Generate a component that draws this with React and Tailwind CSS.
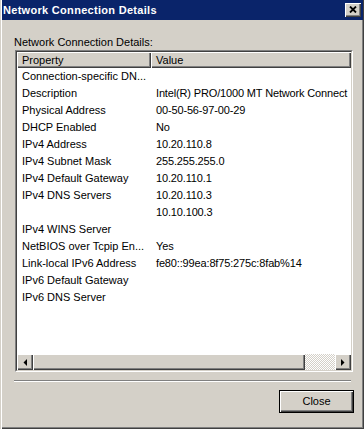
const rows = [
  ["Connection-specific DN...", ""],
  ["Description", "Intel(R) PRO/1000 MT Network Connect"],
  ["Physical Address", "00-50-56-97-00-29"],
  ["DHCP Enabled", "No"],
  ["IPv4 Address", "10.20.110.8"],
  ["IPv4 Subnet Mask", "255.255.255.0"],
  ["IPv4 Default Gateway", "10.20.110.1"],
  ["IPv4 DNS Servers", "10.20.110.3"],
  ["", "10.10.100.3"],
  ["IPv4 WINS Server", ""],
  ["NetBIOS over Tcpip En...", "Yes"],
  ["Link-local IPv6 Address", "fe80::99ea:8f75:275c:8fab%14"],
  ["IPv6 Default Gateway", ""],
  ["IPv6 DNS Server", ""],
];

const raised =
  "bg-[#d4d0c8] shadow-[inset_1px_1px_0_#ffffff,inset_-1px_-1px_0_#404040,inset_-2px_-2px_0_#808080]";

const ArrowLeft = () => (
  <svg width="4" height="7" viewBox="0 0 4 7">
    <path d="M4 0v7L0.5 3.5z" fill="#000" />
  </svg>
);

const ArrowRight = () => (
  <svg width="4" height="7" viewBox="0 0 4 7">
    <path d="M0 0v7l3.5-3.5z" fill="#000" />
  </svg>
);

export default function App() {
  return (
    <div
      className="w-[364px] h-[429px] bg-[#d4d0c8] flex flex-col pl-[2px] pr-[1px] text-[11px] text-black shadow-[inset_1px_0_0_#d4d0c8,inset_2px_0_0_#ffffff,inset_-1px_-1px_0_#404040,inset_-2px_-2px_0_#808080]"
      style={{ fontFamily: '"Liberation Sans", Arial, sans-serif' }}
    >
      {/* title bar */}
      <div className="h-[20px] bg-[#0a246a] flex items-center justify-between pl-[1px] pr-[2px]">
        <span className="text-white font-bold text-[11px] tracking-[0.3px]">
          Network Connection Details
        </span>
        <div className={`w-[16px] h-[14px] flex items-center justify-center ${raised}`}>
          <svg width="8" height="7" viewBox="0 0 8 7" className="mb-[1px]">
            <path d="M1 0.5l6 6M7 0.5l-6 6" stroke="#000" strokeWidth="1.8" />
          </svg>
        </div>
      </div>

      <div className="flex-1 flex flex-col">
        <div className="ml-[12px] mt-[16px] h-[14px] leading-[13px]">Network Connection Details:</div>

        {/* list box */}
        <div className="ml-[13px] w-[338px] h-[322px] border border-t-[#808080] border-l-[#808080] border-b-white border-r-white">
          <div className="w-full h-full flex flex-col bg-white border border-t-[#404040] border-l-[#404040] border-b-[#d4d0c8] border-r-[#d4d0c8]">
            <div className="flex h-[16px] leading-[16px] shrink-0">
              <div className={`w-[134px] pl-[5px] ${raised}`}>Property</div>
              <div className={`flex-1 pl-[5px] ${raised}`}>Value</div>
            </div>
            <div className="flex-1 overflow-hidden">
              {rows.map(([prop, val], i) => (
                <div key={i} className="flex h-[17px] leading-[17px]">
                  <div className="w-[134px] shrink-0 pl-[5px] whitespace-nowrap overflow-hidden">{prop}</div>
                  <div className="flex-1 pl-[5px] whitespace-nowrap overflow-hidden tracking-[-0.15px]">{val}</div>
                </div>
              ))}
            </div>
            <div className="flex h-[16px] shrink-0">
              <div className={`w-[16px] flex items-center justify-center ${raised}`}>
                <ArrowLeft />
              </div>
              <div className={`w-[272px] ${raised}`} />
              <div className="flex-1 bg-[repeating-conic-gradient(#ffffff_0%_25%,#d4d0c8_0%_50%)] bg-[length:2px_2px]" />
              <div className={`w-[16px] flex items-center justify-center ${raised}`}>
                <ArrowRight />
              </div>
            </div>
          </div>
        </div>

        {/* separator */}
        <div className="ml-[12px] mt-[8px] w-[337px] h-[2px] border-t border-t-[#808080] border-b border-b-white" />

        <div className="flex justify-end mt-[8px] mr-[9px]">
          <button className="w-[75px] h-[23px] border border-black bg-[#d4d0c8] shadow-[inset_1px_1px_0_#ffffff,inset_-1px_-1px_0_#404040,inset_-2px_-2px_0_#808080] leading-[19px] text-center">
            Close
          </button>
        </div>
      </div>
    </div>
  );
}
